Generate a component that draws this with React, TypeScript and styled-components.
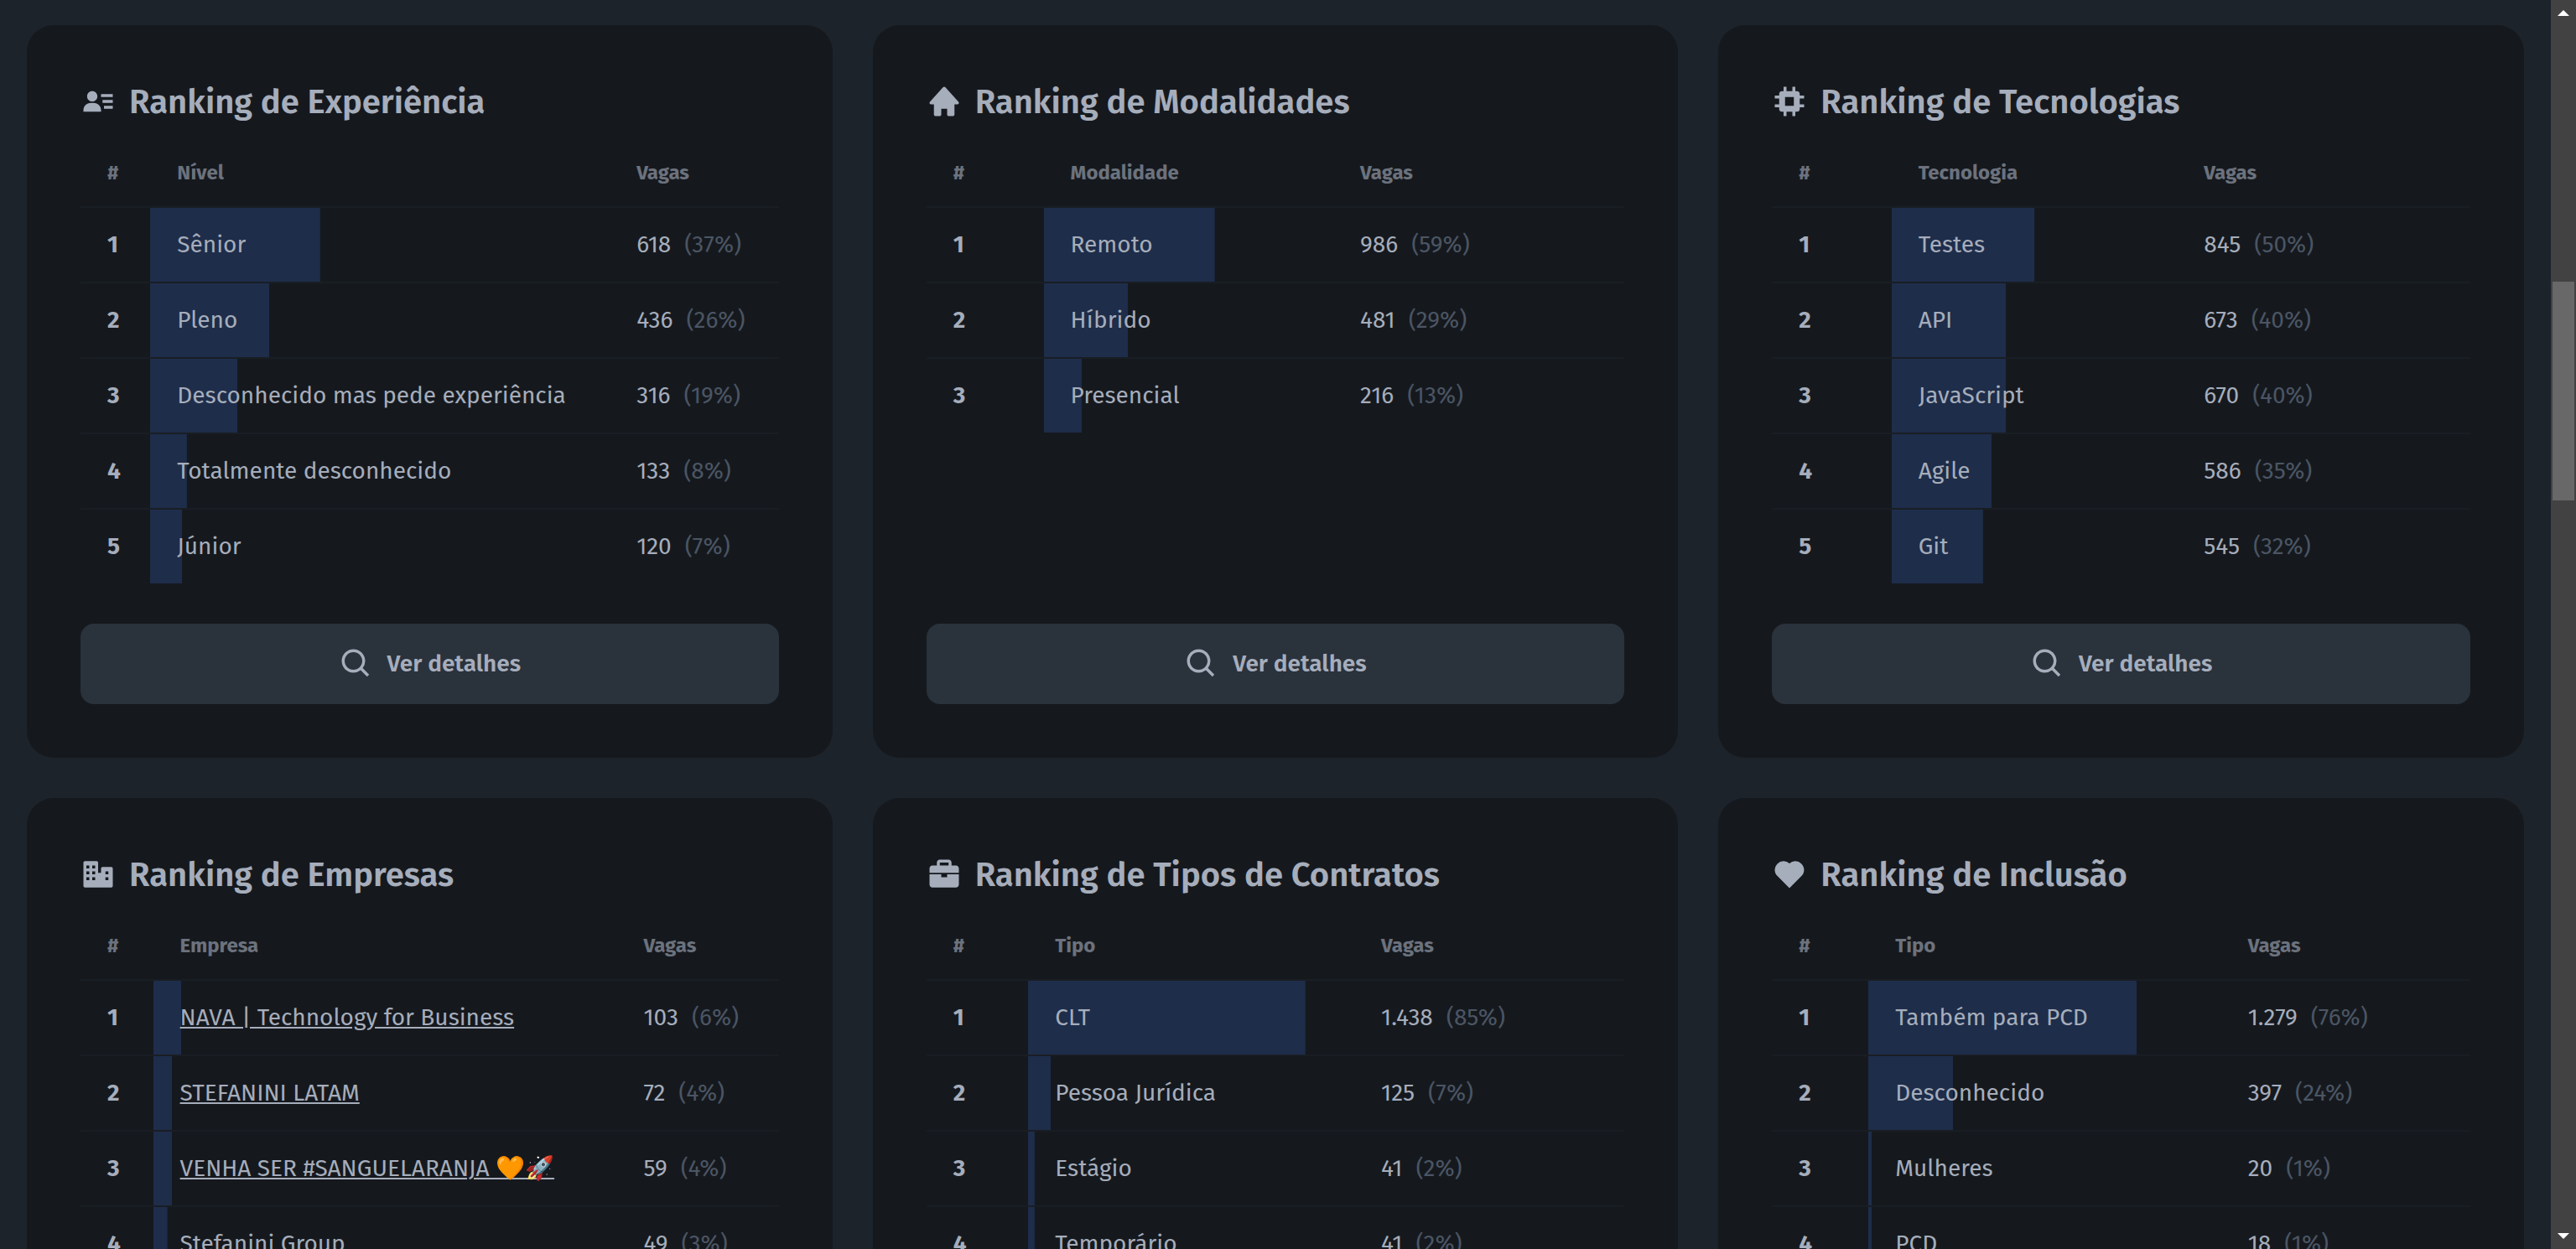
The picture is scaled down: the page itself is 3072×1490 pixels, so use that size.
import React from "react";
import styled, { createGlobalStyle } from "styled-components";
import {
  BiSearch,
  BiSolidUserDetail,
  BiSolidHome,
  BiSolidChip,
  BiSolidBriefcase,
  BiSolidHeart,
} from "react-icons/bi";

const color = {
  page: "#1d232a",
  card: "#15191e",
  line: "#191e24",
  button: "#2a323c",
  bar: "#1e2d4a",
  text: "#a6adbb",
  heading: "#6c727d",
  muted: "#4b5563",
};

const GlobalStyle = createGlobalStyle`
  *, *::before, *::after { box-sizing: border-box; }
  body {
    margin: 0;
    overflow: hidden;
    background: ${color.page};
    color: ${color.text};
    font-family: "Fira Sans", "Noto Sans", sans-serif;
    font-size: 28px;
    line-height: 40px;
  }
`;

const Page = styled.div`
  display: flex;
  height: 100vh;
  overflow: hidden;
`;

const Board = styled.main`
  flex: 1;
  min-width: 0;
  display: grid;
  grid-template-columns: repeat(3, minmax(0, 1fr));
  grid-auto-rows: max-content;
  gap: 48px;
  padding: 30px 32px;
`;

const Card = styled.section`
  display: flex;
  flex-direction: column;
  padding: 64px;
  border-radius: 32px;
  background: ${color.card};
`;

const CardTitle = styled.h2`
  display: flex;
  align-items: center;
  gap: 16px;
  margin: 0 0 16px;
  font-size: 40px;
  font-weight: 600;
  line-height: 56px;

  svg {
    flex: none;
    width: 42px;
    height: 42px;
    margin-bottom: 2px;
  }
`;

const Table = styled.table`
  width: 100%;
  table-layout: fixed;
  border-collapse: separate;
  border-spacing: 0;
  text-align: left;

  tbody tr:last-child > * {
    border-bottom: 0;
  }
`;

const Column = styled.col<{ $share?: number }>`
  width: ${(p) => (p.$share ? `${p.$share}%` : "auto")};
`;

const HeadCell = styled.th`
  padding: 24px 32px;
  border-bottom: 2px solid ${color.line};
  color: ${color.heading};
  font-size: 24px;
  font-weight: 700;
  line-height: 32px;
  white-space: nowrap;
`;

const Position = styled.th`
  padding: 24px 32px;
  border-bottom: 2px solid ${color.line};
  font-weight: 700;
`;

const Cell = styled.td`
  padding: 24px 32px;
  border-bottom: 2px solid ${color.line};
  white-space: nowrap;
`;

const BarCell = styled(Cell)`
  background-image: linear-gradient(${color.bar}, ${color.bar});
  background-repeat: no-repeat;
  background-origin: padding-box;
  background-clip: padding-box;
`;

const CompanyLink = styled.a`
  color: inherit;
  text-decoration: underline;
`;

const Share = styled.span`
  margin-left: 16px;
  color: ${color.muted};
`;

const DetailsButton = styled.button`
  display: flex;
  align-items: center;
  justify-content: center;
  gap: 16px;
  height: 96px;
  margin-top: auto;
  border: 0;
  border-radius: 16px;
  background: ${color.button};
  color: inherit;
  font: inherit;
  font-weight: 600;
  cursor: pointer;
`;

const TableArea = styled.div`
  padding-bottom: 48px;
`;

const Scrollbar = styled.div`
  flex: none;
  display: flex;
  flex-direction: column;
  align-items: center;
  width: 30px;
  background: #424242;
`;

const ScrollArrow = styled.svg`
  flex: none;
  width: 30px;
  height: 30px;
  fill: #ffffff;
`;

const ScrollTrack = styled.div`
  flex: 1;
  display: flex;
  flex-direction: column;
  align-items: center;
  width: 100%;
`;

const ScrollGap = styled.div<{ $grow: number }>`
  flex: ${(p) => p.$grow} 0 0;
`;

const ScrollThumb = styled.div`
  flex: 261 0 0;
  width: 26px;
  background: #686868;
`;

type Row = { name: string; total: string; share: number; href?: string };

type Ranking = {
  title: string;
  icon: React.ComponentType;
  label: string;
  columns: [number, number];
  rows: Row[];
};

/* Two joined office towers with square windows. */
function TowersIcon() {
  return (
    <svg viewBox="0 0 24 24" fill="currentColor" fillRule="evenodd" aria-hidden>
      <path d="M3 3h8a1 1 0 0 1 1 1v7h2V8a1 1 0 0 1 1-1h6a1 1 0 0 1 1 1v12a1 1 0 0 1-1 1H3a1 1 0 0 1-1-1V4a1 1 0 0 1 1-1zM4 6v2h2V6zM8 6v2h2V6zM4 10v2h2v-2zM8 10v2h2v-2zM4 14v2h2v-2zM8 14v2h2v-2zM17 10v2h2v-2zM17 14v2h2v-2z" />
    </svg>
  );
}

const rankings: Ranking[] = [
  {
    title: "Ranking de Experiência",
    icon: BiSolidUserDetail,
    label: "Nível",
    columns: [10, 65.8],
    rows: [
      { name: "Sênior", total: "618", share: 37 },
      { name: "Pleno", total: "436", share: 26 },
      { name: "Desconhecido mas pede experiência", total: "316", share: 19 },
      { name: "Totalmente desconhecido", total: "133", share: 8 },
      { name: "Júnior", total: "120", share: 7 },
    ],
  },
  {
    title: "Ranking de Modalidades",
    icon: BiSolidHome,
    label: "Modalidade",
    columns: [16.8, 41.5],
    rows: [
      { name: "Remoto", total: "986", share: 59 },
      { name: "Híbrido", total: "481", share: 29 },
      { name: "Presencial", total: "216", share: 13 },
    ],
  },
  {
    title: "Ranking de Tecnologias",
    icon: BiSolidChip,
    label: "Tecnologia",
    columns: [17.1, 40.9],
    rows: [
      { name: "Testes", total: "845", share: 50 },
      { name: "API", total: "673", share: 40 },
      { name: "JavaScript", total: "670", share: 40 },
      { name: "Agile", total: "586", share: 35 },
      { name: "Git", total: "545", share: 32 },
    ],
  },
  {
    title: "Ranking de Empresas",
    icon: TowersIcon,
    label: "Empresa",
    columns: [10.4, 66.4],
    rows: [
      { name: "NAVA | Technology for Business", total: "103", share: 6, href: "#nava" },
      { name: "STEFANINI LATAM", total: "72", share: 4, href: "#stefanini-latam" },
      { name: "VENHA SER #SANGUELARANJA 🧡🚀", total: "59", share: 4, href: "#sanguelaranja" },
      { name: "Stefanini Group", total: "49", share: 3, href: "#stefanini-group" },
    ],
  },
  {
    title: "Ranking de Tipos de Contratos",
    icon: BiSolidBriefcase,
    label: "Tipo",
    columns: [14.6, 46.7],
    rows: [
      { name: "CLT", total: "1.438", share: 85 },
      { name: "Pessoa Jurídica", total: "125", share: 7 },
      { name: "Estágio", total: "41", share: 2 },
      { name: "Temporário", total: "41", share: 2 },
    ],
  },
  {
    title: "Ranking de Inclusão",
    icon: BiSolidHeart,
    label: "Tipo",
    columns: [13.8, 50.5],
    rows: [
      { name: "Também para PCD", total: "1.279", share: 76 },
      { name: "Desconhecido", total: "397", share: 24 },
      { name: "Mulheres", total: "20", share: 1 },
      { name: "PCD", total: "18", share: 1 },
    ],
  },
];

function RankingCard({ title, icon: Icon, label, columns, rows }: Ranking) {
  return (
    <Card>
      <CardTitle>
        <Icon />
        {title}
      </CardTitle>
      <TableArea>
        <Table>
          <colgroup>
            <Column $share={columns[0]} />
            <Column $share={columns[1]} />
            <Column />
          </colgroup>
          <thead>
            <tr>
              <HeadCell scope="col">#</HeadCell>
              <HeadCell scope="col">{label}</HeadCell>
              <HeadCell scope="col">Vagas</HeadCell>
            </tr>
          </thead>
          <tbody>
            {rows.map((row, index) => (
              <tr key={row.name}>
                <Position scope="row">{index + 1}</Position>
                <BarCell style={{ backgroundSize: `${row.share}% 100%` }}>
                  {row.href ? <CompanyLink href={row.href}>{row.name}</CompanyLink> : row.name}
                </BarCell>
                <Cell>
                  {row.total}
                  <Share>({row.share}%)</Share>
                </Cell>
              </tr>
            ))}
          </tbody>
        </Table>
      </TableArea>
      <DetailsButton type="button">
        <BiSearch size={42} aria-hidden />
        Ver detalhes
      </DetailsButton>
    </Card>
  );
}

export default function App() {
  return (
    <Page>
      <GlobalStyle />
      <Board>
        {rankings.map((ranking) => (
          <RankingCard key={ranking.title} {...ranking} />
        ))}
      </Board>
      <Scrollbar aria-hidden>
        <ScrollArrow viewBox="0 0 30 30">
          <path d="M15 12l7 7H8z" />
        </ScrollArrow>
        <ScrollTrack>
          <ScrollGap $grow={306} />
          <ScrollThumb />
          <ScrollGap $grow={863} />
        </ScrollTrack>
        <ScrollArrow viewBox="0 0 30 30">
          <path d="M15 18l7-7H8z" />
        </ScrollArrow>
      </Scrollbar>
    </Page>
  );
}
